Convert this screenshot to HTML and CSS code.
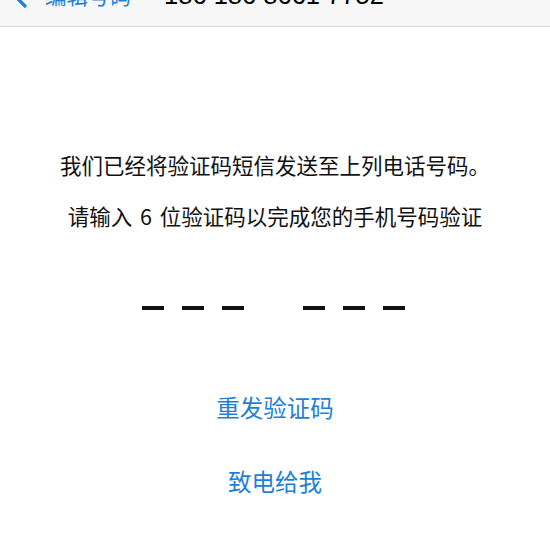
FILE: index.html
```
<!DOCTYPE html>
<html lang="zh-CN">
<head>
<meta charset="utf-8">
<title>验证</title>
<link rel="stylesheet" href="styles.css">
</head>
<body>
<header class="nav">
  <div class="nav-row">
    <svg class="back" width="16" height="26" viewBox="0 0 16 26" aria-hidden="true">
      <path d="M14 2 L3 13 L14 24" fill="none" stroke="#1f7fd6" stroke-width="3.2" stroke-linecap="round" stroke-linejoin="round"/>
    </svg>
    <span class="back-label">编辑号码</span>
    <span class="phone">186 186 8661 7752</span>
  </div>
</header>
<main class="content">
  <p class="msg msg-first">我们已经将验证码短信发送至上列电话号码。</p>
  <p class="msg msg-second">请输入 6 位验证码以完成您的手机号码验证</p>
  <div class="code">
    <div class="group"><span class="dash"></span><span class="dash"></span><span class="dash"></span></div>
    <div class="group"><span class="dash"></span><span class="dash"></span><span class="dash"></span></div>
  </div>
  <a class="link link-resend">重发验证码</a>
  <a class="link link-call">致电给我</a>
</main>
</body>
</html>
```
FILE: styles.css
```
html, body {
  margin: 0;
  padding: 0;
  background: #ffffff;
}
body {
  width: 550px;
  height: 550px;
  overflow: hidden;
  font-family: "Noto Sans CJK SC", "Noto Sans", sans-serif;
  color: #111111;
}
.nav {
  height: 26px;
  background: #f7f7f7;
  border-bottom: 1px solid #d6d6d6;
  display: flex;
  align-items: flex-end;
  overflow: hidden;
}
.nav-row {
  display: flex;
  align-items: baseline;
  height: 30px;
  margin-bottom: 16px;
  padding-left: 11px;
  flex-shrink: 0;
}
.back {
  align-self: center;
  flex-shrink: 0;
}
.back-label {
  margin-left: 18px;
  font-size: 21.5px;
  line-height: 30px;
  color: #1f7fd6;
  font-family: "Noto Sans CJK SC", sans-serif;
}
.phone {
  margin-left: 33px;
  font-family: "Liberation Sans", Arial, sans-serif;
  font-size: 25.5px;
  line-height: 30px;
  color: #000;
}
.content {
  display: flex;
  flex-direction: column;
  align-items: center;
  padding-top: 123px;
}
.msg {
  margin: 0;
  font-size: 21.5px;
  line-height: 30px;
  color: #111;
  text-align: center;
}
.msg-second {
  margin-top: 21px;
  word-spacing: 3px;
}
.code {
  display: flex;
  gap: 59px;
  margin-top: 75px;
  margin-right: 3px;
}
.group {
  display: flex;
  gap: 18px;
}
.dash {
  display: block;
  width: 22px;
  height: 4px;
  background: #111;
}
.link {
  font-size: 23.5px;
  line-height: 32px;
  color: #1f7fd6;
  text-decoration: none;
}
.link-resend {
  margin-top: 81px;
}
.link-call {
  margin-top: 42px;
}
```
